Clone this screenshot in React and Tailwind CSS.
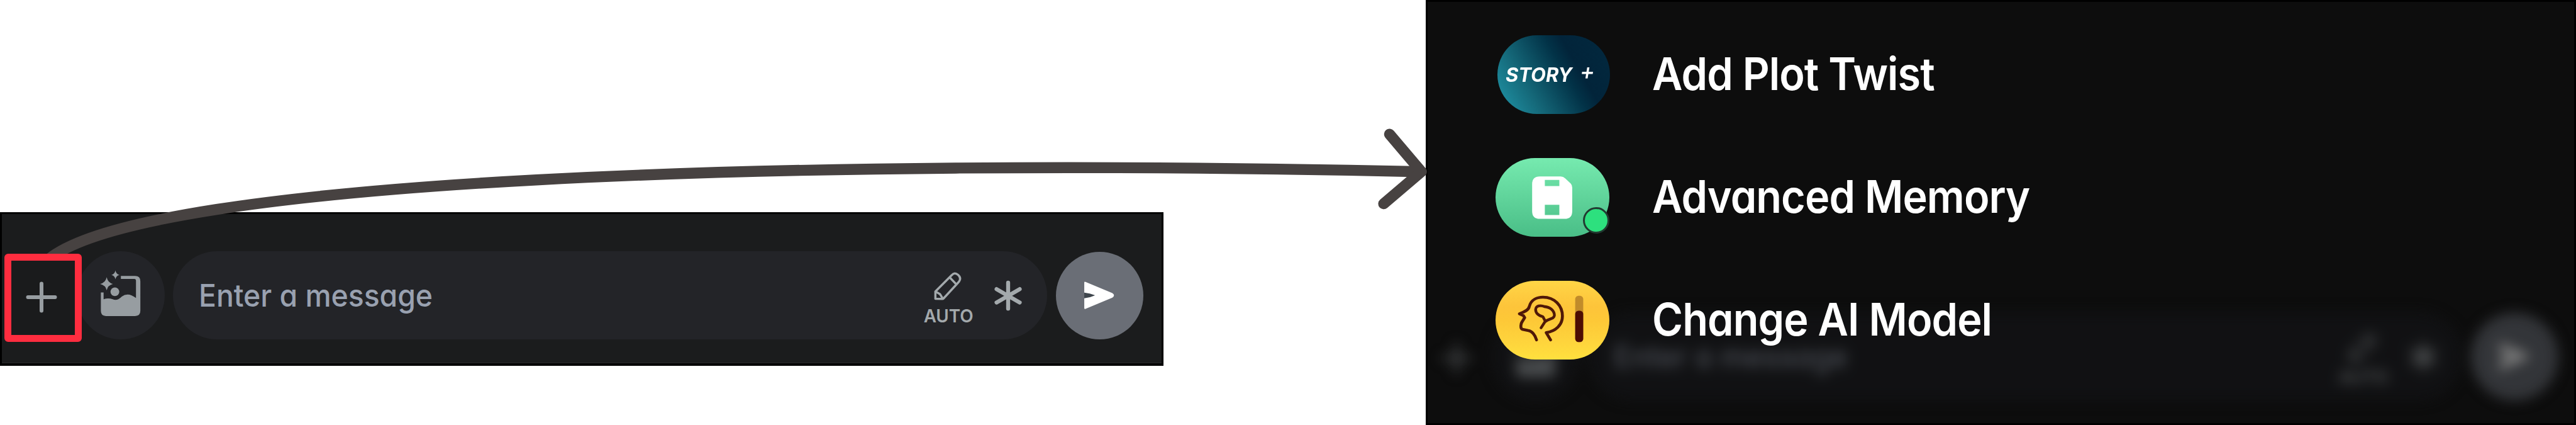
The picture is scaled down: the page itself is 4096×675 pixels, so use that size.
import React from "react";

const FONT = "font-['Inter','Liberation_Sans',sans-serif] [font-feature-settings:'cv11']";

function ImageIcon() {
  return (
    <svg viewBox="71 69 280 280" className="size-[81px]" fill="#979da1">
      <path d="M100 192H115V229Q140 220 165 229Q190 240 215 214Q250 188 293 222V127Q293 117 284 117H210V101H288Q317 101 317 130V293Q317 321 288 321H128Q100 321 100 293Z" />
      <path d="M132 108Q138 138 166 145Q138 152 132 180Q126 152 96 145Q126 138 132 108Z" />
      <path d="M180 71Q184 92 202 96Q184 100 180 119Q176 100 158 96Q176 92 180 71Z" />
      <circle cx="177" cy="188" r="30" fill="#232428" />
      <circle cx="177" cy="188" r="24" />
    </svg>
  );
}

function PencilIcon() {
  return (
    <svg viewBox="145 130 170 175" className="h-[51px] w-[49px]" fill="none" stroke="#a3a9ac" strokeWidth="12" strokeLinejoin="round">
      <path d="M160 287V247L250 157Q266 138 285 155Q305 173 290 193L205 285Q203 288 198 288Z" />
      <path d="M238 168L274 206M162 248L186 262L200 285" />
    </svg>
  );
}

function AsteriskIcon() {
  return (
    <svg viewBox="472 180 160 176" className="h-[51px] w-[46px]" fill="none" stroke="#a3a9ac" strokeWidth="22" strokeLinecap="round">
      <path d="M552 196V340M488 232L616 306M616 232L488 306" />
    </svg>
  );
}

function SendIcon() {
  return (
    <svg viewBox="956 169 200 200" className="size-[58px]">
      <path d="M970 252H1024V288H970Z" fill="#3f464d" />
      <path d="M970 199Q970 193 977 196L1124 257Q1142 269 1124 282L977 343Q970 346 970 340V285Q1000 283 1030 269Q1000 256 970 254Z" fill="#fff" />
    </svg>
  );
}

function ComposerRow({ highlight }) {
  return (
    <div className={`flex h-[140px] w-[1818px] shrink-0 items-center ${FONT}`}>
      <div
        className={`relative z-10 mt-2 -mr-2 flex h-[140px] w-[123px] shrink-0 items-center justify-center rounded-[6px] border-[11px] ${
          highlight ? "border-[#ff2d3f] bg-[#1a1b1c]" : "border-transparent"
        }`}
      >
        <svg viewBox="0 0 50 50" className="mr-[5px] mb-0.5 size-[50px] shrink-0" stroke="#979da1" strokeWidth="6" strokeLinecap="round">
          <path d="M25 3.500V46.500M3.500 25H46.500" />
        </svg>
      </div>
      <div className="flex size-[140px] shrink-0 items-center justify-center rounded-full bg-[#232428]">
        <ImageIcon />
      </div>
      <div className="ml-[13px] flex h-[140px] w-[1390px] shrink-0 items-center rounded-full bg-[#232428] pr-[39px] pl-[41px]">
        <span className="flex-1 origin-left scale-x-[0.935] text-[49.5px] font-medium whitespace-nowrap text-[#99a1b0]">Enter a message</span>
        <div className="mr-[31px] flex flex-col items-center pt-2">
          <PencilIcon />
          <span className="mt-1.5 scale-x-[0.96] text-[29px] leading-8 font-semibold text-[#a3a9ac]">AUTO</span>
        </div>
        <AsteriskIcon />
      </div>
      <div className="ml-[14px] flex size-[139px] shrink-0 items-center justify-center rounded-full bg-[#6a6e76]">
        <SendIcon />
      </div>
    </div>
  );
}

function StoryBadge() {
  return (
    <div className="ml-[3px] flex h-[125px] w-[179px] items-center rounded-full bg-[linear-gradient(60deg,#1f92a4_4%,#15697a_28%,#023247_58%,#02243a_68%,#02293f_100%)] pl-[13px] text-white">
      <span className="text-[31px] leading-none font-bold italic">STORY</span>
      <span className="mb-3 ml-3 text-[36px] leading-none font-medium italic">+</span>
    </div>
  );
}

function MemoryBadge() {
  return (
    <div className="relative flex h-[125px] w-[181px] items-center justify-center rounded-full bg-linear-to-b from-[#76eaaf] to-[#49be87]">
      <svg viewBox="1190 352 260 260" className="size-[75px]">
        <path
          fillRule="evenodd"
          fill="#fff"
          d="M1250 367H1365Q1380 367 1390 377L1420 405Q1429 414 1429 428V558Q1429 600 1387 600H1250Q1208 600 1208 558V409Q1208 367 1250 367ZM1278 386V420H1358V386ZM1278 523V579H1358V523Z"
        />
      </svg>
      <span className="absolute top-[78px] left-[139px] size-[42px] rounded-full border-[3px] border-[#223a31] bg-[#2de07e]" />
    </div>
  );
}

function ModelBadge() {
  return (
    <div className="flex h-[125px] w-[181px] items-center justify-center rounded-full bg-[linear-gradient(180deg,#ffd546_0%,#fdc43a_33%,#fdc837_50%,#fed33c_75%,#ffe03e_100%)]">
      <svg viewBox="209 134 420 300" className="h-[87px] w-[122px]" fill="none" stroke="#4f1808" strokeWidth="16" strokeLinecap="round" strokeLinejoin="round">
        <path d="M330 392C322 365 305 343 285 341L252 334C238 327 246 300 250 294L265 270L258 259L236 249C262 240 286 230 290 210C300 170 335 158 365 158C430 158 472 205 472 262C472 310 435 345 383 352L407 392" />
        <path d="M355 326L378 290L365 265C340 258 325 245 325 225C327 205 352 200 374 210C405 212 428 232 428 258C425 280 400 273 378 292" strokeWidth="15" />
        <rect x="542" y="150" width="44" height="254" rx="18" fill="#c18b2a" stroke="none" />
        <rect x="542" y="232" width="44" height="172" rx="18" fill="#4d0d03" stroke="none" />
      </svg>
    </div>
  );
}

const ITEMS = [
  { Badge: StoryBadge, label: "Add Plot Twist" },
  { Badge: MemoryBadge, label: "Advanced Memory" },
  { Badge: ModelBadge, label: "Change AI Model" },
];

export default function App() {
  return (
    <div className={`relative flex h-[675px] w-[4096px] overflow-hidden bg-white ${FONT}`}>
      <div className="w-[2267px] shrink-0 pt-[337px]">
        <div className="h-[244px] w-[1850px] border-[3px] border-b-4 border-black bg-[#1b1c1d]">
          <div className="h-full border-b border-[#2a2b2c] pt-[59px] pl-[4px]">
            <ComposerRow highlight />
          </div>
        </div>
      </div>

      <div className="relative w-[1829px] shrink-0 overflow-hidden border-[3px] border-black bg-[#0d0d0d]">
        <div className="absolute top-[493px] -left-[13px] blur-[10px] brightness-[0.48]" aria-hidden="true">
          <ComposerRow />
        </div>
        <ul className="relative flex flex-col gap-[70px] pt-[53px] pl-[108px]">
          {ITEMS.map(({ Badge, label }) => (
            <li key={label} className="flex h-[125px] items-center">
              <div className="w-[249px] shrink-0">
                <Badge />
              </div>
              <span className="mb-1 origin-left scale-x-[0.925] text-[72px] leading-none font-semibold tracking-[-1px] whitespace-nowrap text-white">
                {label}
              </span>
            </li>
          ))}
        </ul>
      </div>

      <svg viewBox="0 0 4712 776" className="absolute inset-0 h-[675px] w-[4096px]" fill="none" stroke="#474241" strokeWidth="20">
        <path d="M89.500 473C270 326 1450 287.600 2600 313.500" />
        <path d="M2541.700 245L2600 313.500L2531 372" strokeLinecap="round" strokeLinejoin="round" />
      </svg>
    </div>
  );
}
